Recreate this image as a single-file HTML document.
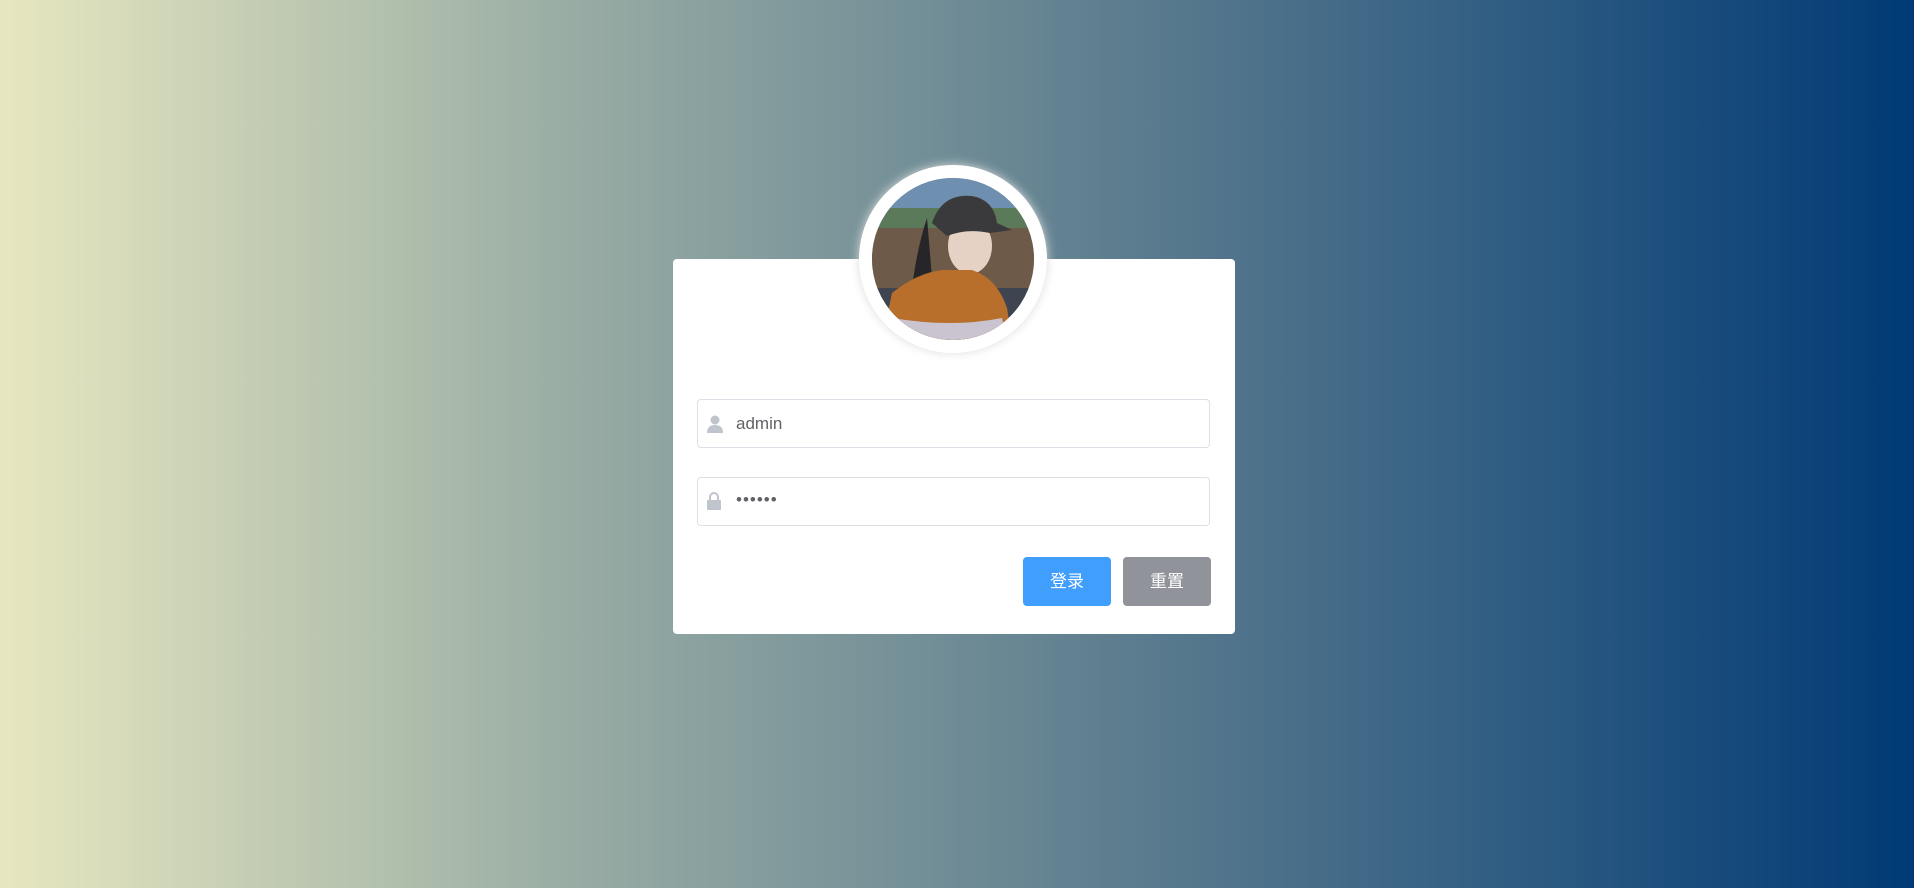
<!DOCTYPE html>
<html><head><meta charset="utf-8"><style>
html,body{margin:0;width:1914px;height:888px;overflow:hidden}
body{background:linear-gradient(90deg,#e7e7c0 0%,#98aca4 30%,#5a7b8e 60%,#003a75 100%);font-family:"Liberation Sans","Noto Sans CJK SC",sans-serif;position:relative}
.card{position:absolute;left:673px;top:259px;width:562px;height:375px;background:#fff;border-radius:4px}
.av{position:absolute;left:859px;top:165px;width:188px;height:188px;border-radius:50%;background:#fff;box-shadow:0 0 10px #ddd}
.av svg{position:absolute;left:13px;top:13px}
.in{position:absolute;left:697px;width:511px;height:47px;border:1px solid #dcdfe6;border-radius:4px;background:#fff;font-size:17px;color:#606266}
.in span{position:absolute;left:38px;top:14px}
.btn{position:absolute;top:557px;width:88px;height:49px;border-radius:4px;color:#fff;font-size:17px;text-align:center;line-height:49px}
</style></head><body>
<div class="card"></div>
<div class="av"><svg width="162" height="162" viewBox="0 0 162 162">
<defs><clipPath id="c"><circle cx="81" cy="81" r="81"/></clipPath></defs>
<g clip-path="url(#c)">
<rect width="162" height="162" fill="#5d6a7a"/>
<rect y="0" width="162" height="30" fill="#6f8fb0"/>
<rect y="30" width="162" height="20" fill="#5b7a5a"/>
<rect y="50" width="162" height="60" fill="#6e5a48"/>
<rect y="110" width="162" height="52" fill="#3e4450"/>
<path d="M55 40 Q45 70 40 110 L60 100 Z" fill="#262628"/>
<ellipse cx="98" cy="68" rx="22" ry="28" fill="#e6d2c4"/>
<path d="M60 45 Q70 15 100 18 Q122 22 125 45 L140 52 L118 55 Q95 50 75 58 Z" fill="#3a3a3c"/>
<path d="M10 162 L20 115 Q45 95 70 92 L100 92 Q125 100 135 130 L140 162 Z" fill="#b86f2c"/>
<path d="M20 140 Q80 150 130 140 L135 162 L18 162 Z" fill="#c9c4cf"/>
</g></svg></div>
<div class="in" style="top:399px"><svg style="position:absolute;left:8px;top:15px" width="18" height="18" viewBox="0 0 18 18"><circle cx="9" cy="5" r="4.5" fill="#c0c4cc"/><path d="M1 18 Q1 10 9 10 Q17 10 17 18Z" fill="#c0c4cc"/></svg><span>admin</span></div>
<div class="in" style="top:477px"><svg style="position:absolute;left:8px;top:14px" width="16" height="18" viewBox="0 0 16 18"><path d="M4 8 V5 a4 4 0 0 1 8 0 V8" stroke="#c0c4cc" stroke-width="2" fill="none"/><rect x="1" y="8" width="14" height="10" rx="1" fill="#c0c4cc"/></svg><span style="top:12px;letter-spacing:1px">••••••</span></div>
<div class="btn" style="left:1023px;background:#409eff">登录</div>
<div class="btn" style="left:1123px;background:#909399">重置</div>
</body></html>
